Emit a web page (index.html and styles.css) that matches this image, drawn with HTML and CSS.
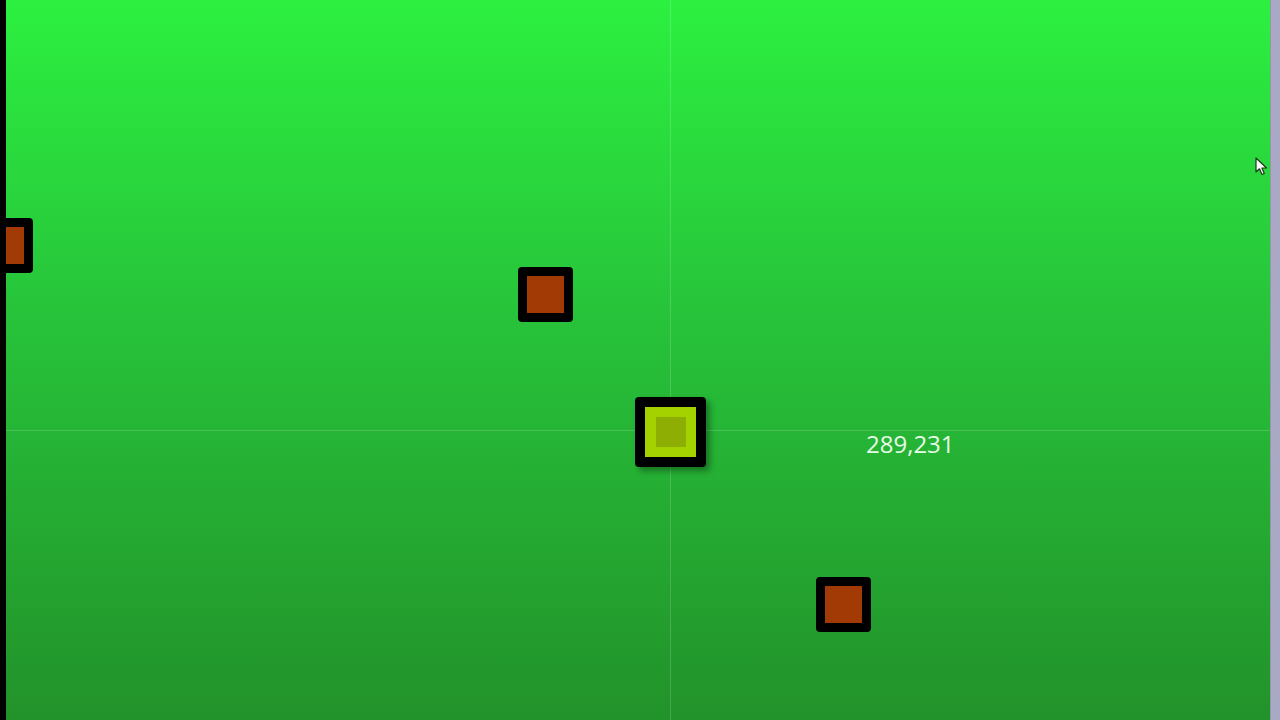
FILE: index.html
```html
<!DOCTYPE html>
<html>
<head>
<meta charset="utf-8">
<link rel="stylesheet" href="styles.css">
</head>
<body>
<div class="app">
  <div class="edge-left"></div>
  <div class="canvas">
    <div class="line-v"></div>
    <div class="line-h"></div>
    <div class="node n-left"><div class="core"></div></div>
    <div class="node n-a"><div class="core"></div></div>
    <div class="node n-b"><div class="core"></div></div>
    <div class="node sel"><div class="core"><div class="dot"></div></div></div>
    <div class="coords">289,231</div>
    <svg class="cursor" width="14" height="20" viewBox="0 0 14 20">
      <path d="M1 1 L1 15 L4.5 11.8 L7 17.5 L9.3 16.5 L6.9 11 L11.5 11 Z" fill="#ffffff" stroke="#1a3a1a" stroke-width="1.2" stroke-linejoin="round"/>
    </svg>
  </div>
  <div class="edge-right"></div>
</div>
</body>
</html>
```
FILE: styles.css
```css
html, body {
  margin: 0;
  padding: 0;
  width: 1280px;
  height: 720px;
  overflow: hidden;
}
.app {
  display: flex;
  width: 1280px;
  height: 720px;
}
.edge-left {
  width: 6px;
  background: #000;
  flex: none;
}
.edge-right {
  width: 10px;
  background: #a9a9c6;
  flex: none;
  box-shadow: inset 1px 0 0 #8f9f9f;
}
.canvas {
  position: relative;
  flex: 1;
  overflow: hidden;
  background: linear-gradient(180deg, #2cf040 0%, #27c23a 45%, #22922a 100%);
}
.line-v {
  position: absolute;
  left: 664px;
  top: 0;
  width: 1px;
  height: 720px;
  background: rgba(255,255,255,0.16);
}
.line-h {
  position: absolute;
  left: 0;
  top: 430px;
  width: 100%;
  height: 1px;
  background: rgba(255,255,255,0.16);
}
.node {
  position: absolute;
  box-sizing: border-box;
  width: 55px;
  height: 55px;
  border: 9px solid #000;
  border-radius: 4px;
  background: #000;
}
.node .core {
  width: 100%;
  height: 100%;
  background: #a13a05;
}
.n-left { left: -28px; top: 218px; }
.n-a { left: 512px; top: 267px; }
.n-b { left: 810px; top: 577px; }
.sel {
  left: 629px;
  top: 397px;
  width: 71px;
  height: 70px;
  border-width: 10px;
  box-shadow: 4px 4px 6px rgba(0,0,0,0.35);
  z-index: 2;
}
.sel .core {
  background: #a3d200;
  display: flex;
  align-items: center;
  justify-content: center;
}
.sel .dot {
  width: 30px;
  height: 30px;
  background: #8fae04;
}
.coords {
  position: absolute;
  left: 860px;
  top: 428px;
  font-family: "Open Sans", "DejaVu Sans", sans-serif;
  font-size: 24px;
  line-height: 32px;
  color: #e6fbe6;
}
.cursor {
  position: absolute;
  left: 1249px;
  top: 157px;
}
```
